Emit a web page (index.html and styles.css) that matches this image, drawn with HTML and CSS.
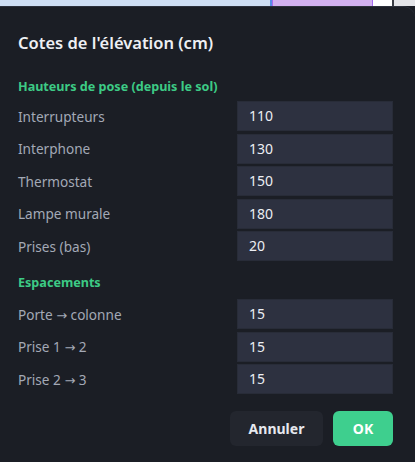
FILE: index.html
```html
<!DOCTYPE html>
<html lang="fr">
<head>
<meta charset="utf-8">
<title>Cotes de l'élévation</title>
<link rel="stylesheet" href="styles.css">
</head>
<body>
<div class="backdrop">
  <div class="strip">
    <span class="seg seg-blue"></span>
    <span class="seg seg-purple"></span>
    <span class="seg seg-white"></span>
    <span class="seg seg-gray"></span>
  </div>
  <div class="dialog">
    <h2 class="title">Cotes de l'élévation (cm)</h2>
    <h3 class="section">Hauteurs de pose (depuis le sol)</h3>
    <div class="rows">
      <div class="row"><span class="label">Interrupteurs</span><span class="input">110</span></div>
      <div class="row"><span class="label">Interphone</span><span class="input">130</span></div>
      <div class="row"><span class="label">Thermostat</span><span class="input">150</span></div>
      <div class="row"><span class="label">Lampe murale</span><span class="input">180</span></div>
      <div class="row"><span class="label">Prises (bas)</span><span class="input">20</span></div>
    </div>
    <h3 class="section section-2">Espacements</h3>
    <div class="rows">
      <div class="row"><span class="label">Porte <span class="arrow">→</span> colonne</span><span class="input">15</span></div>
      <div class="row"><span class="label">Prise 1 <span class="arrow">→</span> 2</span><span class="input">15</span></div>
      <div class="row"><span class="label">Prise 2 <span class="arrow">→</span> 3</span><span class="input">15</span></div>
    </div>
    <div class="actions">
      <button class="btn btn-cancel">Annuler</button>
      <button class="btn btn-ok">OK</button>
    </div>
  </div>
</div>
</body>
</html>
```
FILE: styles.css
```css
* { box-sizing: border-box; }
html, body {
  margin: 0;
  padding: 0;
  width: 415px;
  height: 462px;
  overflow: hidden;
  background: #1b1e25;
  font-family: "Noto Sans", "Open Sans", sans-serif;
}
.backdrop {
  display: flex;
  flex-direction: column;
  height: 462px;
}
.strip {
  display: flex;
  height: 6px;
  flex: none;
}
.seg { display: block; height: 100%; }
.seg-blue { width: 272px; background: #cfdff4; border-right: 2px solid #5b8de8; }
.seg-purple { width: 101px; background: #d3b1f0; border-left: 1px solid #a46cf0; border-right: 1px solid #a46cf0; }
.seg-white { width: 21px; background: #ffffff; border-right: 2px solid #3a3d44; }
.seg-gray { flex: 1; background: #e4e5e8; }
.dialog {
  flex: 1;
  background: #1b1e25;
  border-top: 1px solid #2c303b;
  border-radius: 0 12px 0 0;
  padding: 25px 22px 0 18px;
  position: relative;
}
.title {
  margin: 0;
  font-size: 16.5px;
  font-weight: 600;
  color: #eef0f4;
  line-height: 22px;
}
.section {
  margin: 24px 0 5px;
  font-size: 12.6px;
  font-weight: 700;
  color: #3dcb85;
  line-height: 18px;
}
.section-2 { margin-top: 13px; margin-bottom: 7px; }
.rows {
  display: flex;
  flex-direction: column;
  gap: 2.5px;
}
.row {
  display: flex;
  align-items: center;
  justify-content: space-between;
  height: 30px;
}
.label {
  font-size: 13.6px;
  color: #a3a9b6;
}
.arrow {
  font-family: "DejaVu Sans", sans-serif;
  font-size: 13px;
}
.input {
  width: 156px;
  height: 30px;
  background: #2d3140;
  border: 1px solid #282c38;
  color: #eceef3;
  font-size: 14px;
  line-height: 28px;
  padding-left: 11px;
}
.actions {
  display: flex;
  justify-content: flex-end;
  gap: 10px;
  margin-top: 17px;
}
.btn {
  border: none;
  font-family: inherit;
  font-size: 14px;
  font-weight: 700;
  height: 35px;
  border-radius: 6px;
  color: #ffffff;
}
.btn-cancel {
  width: 93px;
  background: #23262e;
  color: #e6e8ee;
}
.btn-ok {
  width: 60px;
  background: #3ecf8e;
}
```
